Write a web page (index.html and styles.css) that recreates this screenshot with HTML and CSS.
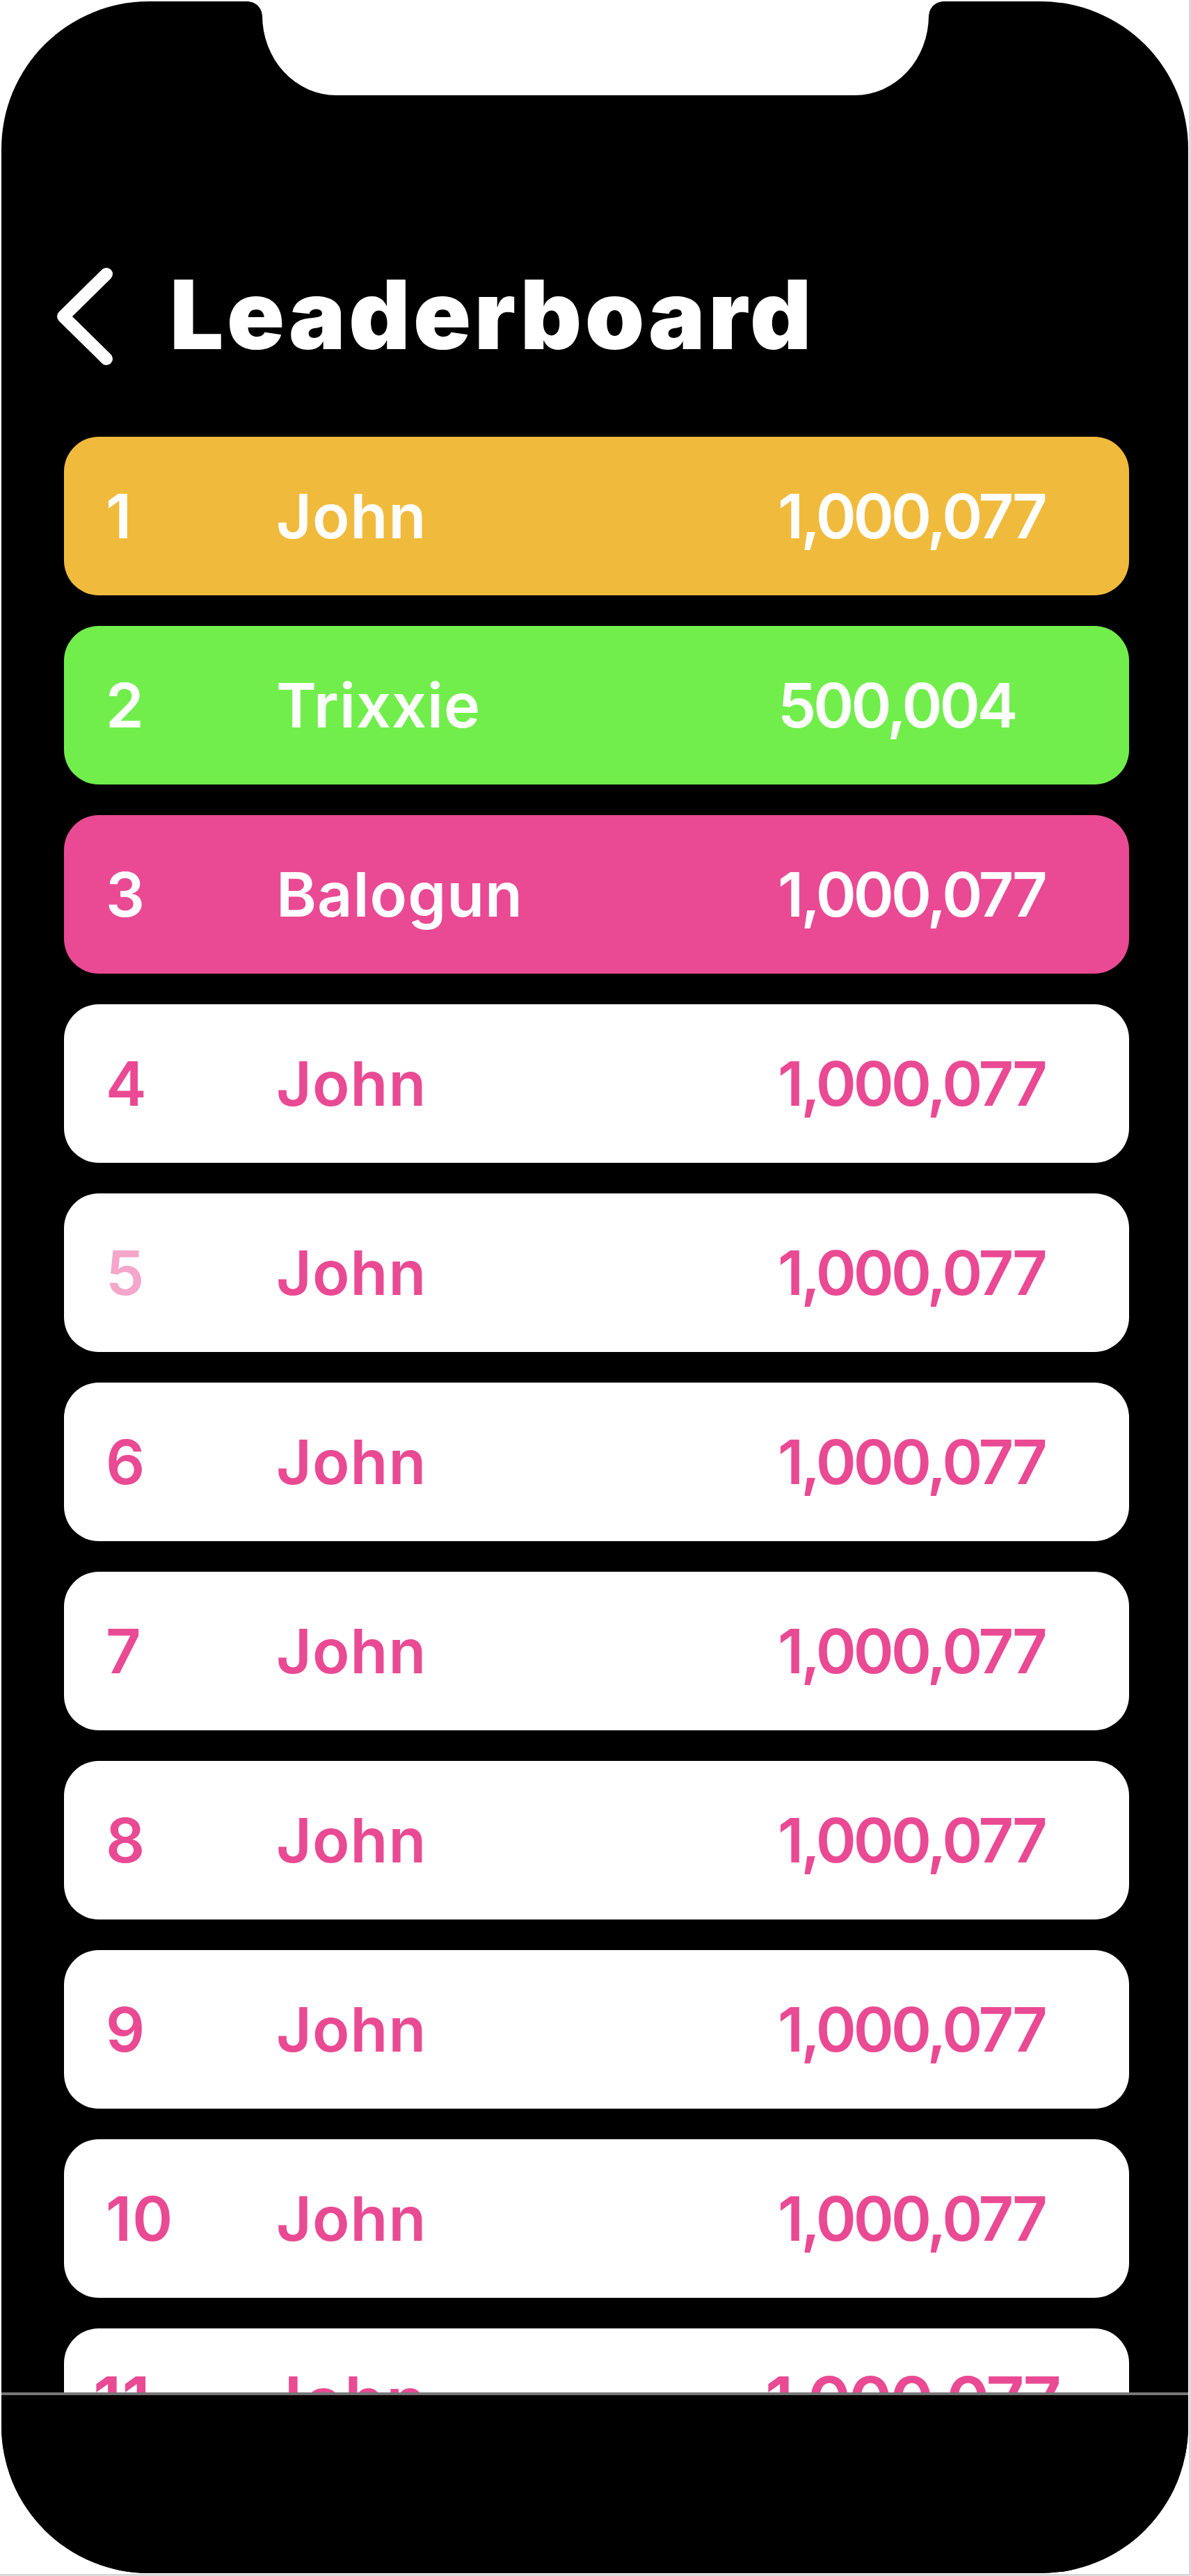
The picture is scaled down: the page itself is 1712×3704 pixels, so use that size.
FILE: index.html
```html
<!DOCTYPE html>
<html lang="en">
<head>
<meta charset="utf-8">
<title>Leaderboard</title>
<link rel="stylesheet" href="styles.css">
</head>
<body>
<div class="canvas">
  <div class="device">
    <div class="notch"></div>
    <div class="screen">
      <header class="header">
        <svg class="back" viewBox="0 0 100 150" width="100" height="150" aria-hidden="true">
          <polyline points="83,17 21,78 83,139" fill="none" stroke="#fff" stroke-width="18" stroke-linecap="round" stroke-linejoin="round"/>
        </svg>
        <h1 class="title">Leaderboard</h1>
      </header>
      <ol class="board">
        <li class="row row--gold"><span class="rank">1</span><span class="name">John</span><span class="score">1,000,077</span></li>
        <li class="row row--green"><span class="rank">2</span><span class="name">Trixxie</span><span class="score">500,004</span></li>
        <li class="row row--pink"><span class="rank">3</span><span class="name">Balogun</span><span class="score">1,000,077</span></li>
        <li class="row"><span class="rank">4</span><span class="name">John</span><span class="score">1,000,077</span></li>
        <li class="row"><span class="rank rank--soft">5</span><span class="name">John</span><span class="score">1,000,077</span></li>
        <li class="row"><span class="rank">6</span><span class="name">John</span><span class="score">1,000,077</span></li>
        <li class="row"><span class="rank">7</span><span class="name">John</span><span class="score">1,000,077</span></li>
        <li class="row"><span class="rank">8</span><span class="name">John</span><span class="score">1,000,077</span></li>
        <li class="row"><span class="rank">9</span><span class="name">John</span><span class="score">1,000,077</span></li>
        <li class="row"><span class="rank">10</span><span class="name">John</span><span class="score">1,000,077</span></li>
        <li class="row row--peek"><span class="rank">11</span><span class="name">John</span><span class="score">1,000,077</span></li>
      </ol>
    </div>
    <div class="home-bar"></div>
  </div>
</div>
</body>
</html>
```

FILE: styles.css
```css
* { box-sizing: border-box; }

html, body {
  margin: 0;
  padding: 0;
  background: #ffffff;
}

body {
  font-family: Inter, "Liberation Sans", sans-serif;
}

.canvas {
  width: 1711px;
  height: 3703px;
  border-right: 1px solid #a0a0a0;
  border-bottom: 1px solid #a0a0a0;
  padding: 2px 0 0 2px;
}

.device {
  position: relative;
  width: 1706px;
  height: 3698px;
  background: #000000;
  border-radius: 212px;
  overflow: hidden;
}

.notch {
  position: absolute;
  top: 0;
  left: 375px;
  width: 958px;
  height: 135px;
  background: #ffffff;
  border-radius: 0 0 106px 106px / 0 0 115px 115px;
}

.notch::before,
.notch::after {
  content: "";
  position: absolute;
  top: 0;
  width: 21px;
  height: 21px;
}

.notch::before {
  left: -21px;
  background: radial-gradient(circle at 0 100%, transparent 20.5px, #ffffff 21px);
}

.notch::after {
  right: -21px;
  background: radial-gradient(circle at 100% 100%, transparent 20.5px, #ffffff 21px);
}

.screen {
  height: 3438px;
  overflow: hidden;
  padding-top: 375px;
}

.header {
  display: flex;
  align-items: center;
  height: 150px;
  padding-left: 68px;
}

.back {
  display: block;
  flex: none;
}

.title {
  margin: 0 0 0 74px;
  color: #ffffff;
  font-size: 137px;
  font-weight: 900;
  line-height: 1;
  letter-spacing: 4.5px;
}

.board {
  list-style: none;
  margin: 101px 0 0 90px;
  padding: 0;
  width: 1531px;
  display: flex;
  flex-direction: column;
  gap: 44px;
}

.row {
  flex: none;
  height: 228px;
  border-radius: 50px;
  background: #ffffff;
  color: #e94a93;
  display: grid;
  grid-template-columns: 245px 721px 1fr;
  align-items: center;
  padding-left: 60px;
  font-size: 88px;
  font-weight: 600;
  line-height: 1;
  letter-spacing: 1px;
}

.score {
  letter-spacing: -4px;
}

.row--gold { background: #f0bb3c; color: #ffffff; }
.row--green { background: #71ee4c; color: #ffffff; }
.row--pink { background: #e94a93; color: #ffffff; }

.rank--soft { color: #f4a6cb; }

.row--peek {
  align-items: start;
  padding-top: 56px;
  padding-left: 42px;
  font-size: 96px;
}

.home-bar {
  height: 260px;
  border-top: 4px solid #777777;
  background: #000000;
}
```
